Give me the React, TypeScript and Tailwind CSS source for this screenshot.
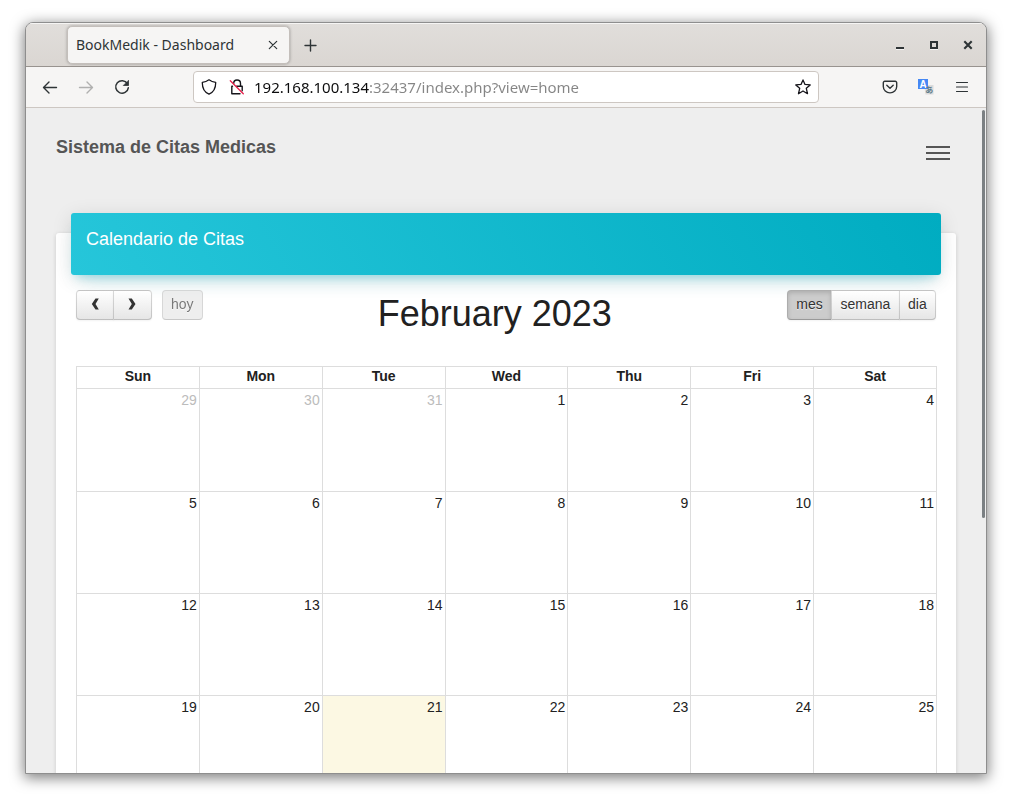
import { useState } from "react";

const DAYS = ["Sun", "Mon", "Tue", "Wed", "Thu", "Fri", "Sat"];

type Day = { n: number; other?: boolean; today?: boolean };

const WEEKS: Day[][] = [
  [{ n: 29, other: true }, { n: 30, other: true }, { n: 31, other: true }, { n: 1 }, { n: 2 }, { n: 3 }, { n: 4 }],
  [5, 6, 7, 8, 9, 10, 11].map((n) => ({ n })),
  [12, 13, 14, 15, 16, 17, 18].map((n) => ({ n })),
  [19, 20, 21, 22, 23, 24, 25].map((n) => ({ n, today: n === 21 })),
];

const VIEWS = ["mes", "semana", "dia"];

function TitleBar() {
  return (
    <div className="flex h-11 shrink-0 items-center border-b border-[#98938f] bg-linear-to-b from-[#e1dedb] to-[#dad6d2] pl-[41px] pr-2 shadow-[inset_0_1px_0_#f6f5f4]">
      <div className="flex h-[38px] w-[223px] items-center justify-between rounded-[5px] border border-[#c4bfbb] bg-[#f6f5f4] px-2 shadow-[0_0_3px_rgba(0,0,0,0.3)]">
        <span className="text-sm leading-5 text-[#2e3436]">BookMedik - Dashboard</span>
        <button aria-label="Close tab" className="flex size-4 items-center justify-center">
          <svg width="16" height="16" viewBox="0 0 16 16" stroke="#2e3436" strokeWidth="1.2" strokeLinecap="round">
            <path d="M4.3 4.3l7.4 7.4M11.7 4.3l-7.4 7.4" />
          </svg>
        </button>
      </div>
      <button aria-label="New tab" className="ml-3 flex size-4 items-center justify-center">
        <svg width="16" height="16" viewBox="0 0 16 16" stroke="#2e3436" strokeWidth="1.4" strokeLinecap="round">
          <path d="M8.500 3v11M3 8.500h11" />
        </svg>
      </button>
      <div className="ml-auto flex gap-[14px]">
        <button aria-label="Minimize" className="flex size-5 items-center justify-center">
          <svg width="16" height="16" viewBox="0 0 16 16">
            <path d="M4 10h8v2H4z" fill="#2e3436" />
            <path d="M4 12h8v1H4z" fill="#f6f5f4" />
          </svg>
        </button>
        <button aria-label="Maximize" className="flex size-5 items-center justify-center">
          <svg width="16" height="16" viewBox="0 0 16 16" fill="none">
            <path d="M4 12.5h8" stroke="#f6f5f4" />
            <path d="M5 5h6v6H5z" stroke="#2e3436" strokeWidth="2" />
          </svg>
        </button>
        <button aria-label="Close window" className="flex size-5 items-center justify-center">
          <svg width="16" height="16" viewBox="0 0 16 16" stroke="#2e3436" strokeWidth="2.1">
            <path d="M4.3 4.3l7.4 7.4M11.7 4.3l-7.4 7.4" />
          </svg>
        </button>
      </div>
    </div>
  );
}

function NavBar() {
  const [url, setUrl] = useState("192.168.100.134:32437/index.php?view=home");
  return (
    <div className="flex h-[41px] shrink-0 items-center border-b border-[#cdc7c2] bg-[#f6f5f4] px-4">
      <div className="flex gap-5">
        <button aria-label="Back">
          <svg width="16" height="16" viewBox="0 0 16 16" fill="none" stroke="#2e3436" strokeWidth="1.4" strokeLinecap="round" strokeLinejoin="round">
            <path d="M14.500 8.500H1.500M7 3L1.500 8.500L7 14" />
          </svg>
        </button>
        <button aria-label="Forward" disabled>
          <svg width="16" height="16" viewBox="0 0 16 16" fill="none" stroke="#b0b0af" strokeWidth="1.4" strokeLinecap="round" strokeLinejoin="round">
            <path d="M1.500 8.500h13M9 3L14.500 8.500L9 14" />
          </svg>
        </button>
        <button aria-label="Reload">
          <svg width="16" height="16" viewBox="0 0 16 16" fill="none" stroke="#2e3436" strokeWidth="1.5" strokeLinecap="round">
            <path d="M13.4 4.600A6.300 6.300 0 1 0 14.300 8.800" />
            <path d="M14.500 1.700v4.800H9.700z" fill="#2e3436" stroke="#2e3436" strokeWidth="0.800" strokeLinejoin="round" />
          </svg>
        </button>
      </div>
      <div className="ml-[63px] mr-[63px] flex h-8 flex-1 items-center rounded-[4px] border border-[#cdc7c2] bg-white px-[7px]">
        <svg width="16" height="16" viewBox="0 0 16 16" fill="none" stroke="#15141a" strokeWidth="1.3" strokeLinejoin="round">
          <path d="M8 .8C6 2.300 3.800 3.100 1.300 3.400C1.200 9 3.200 13.200 8 15.200C12.800 13.200 14.800 9 14.700 3.400C12.200 3.100 10 2.300 8 .8z" />
        </svg>
        <svg className="ml-3" width="16" height="16" viewBox="0 0 16 16" fill="none" strokeLinecap="round">
          <path d="M4.700 4.500C4.700 2.300 6 1 8 1s3.500 1.400 3.500 3.500V7M3.500 7.300H2.800v7.400H11M7.500 7.300h5.700v4.500" stroke="#15141a" strokeWidth="1.400" strokeLinejoin="round" />
          <path d="M1.300 1.800L14.300 14.800" stroke="#e8204c" strokeWidth="1.300" />
        </svg>
        <input
          aria-label="Address"
          value={url}
          onChange={(e) => setUrl(e.target.value)}
          className="ml-[9px] min-w-0 flex-1 bg-[linear-gradient(to_right,#0c0c0d_115px,#858585_115px)] bg-clip-text text-[15px] leading-6 text-transparent caret-black outline-none"
        />
        <button aria-label="Bookmark this page">
          <svg width="16" height="16" viewBox="0 0 16 16" fill="none" stroke="#15141a" strokeWidth="1.300" strokeLinejoin="round">
            <path d="M8 .9L10 5.400L15.200 5.900L11.300 9.300L12.500 14.700L8 12L3.500 14.700L4.700 9.300L.8 5.900L6 5.400z" />
          </svg>
        </button>
      </div>
      <div className="flex gap-5">
        <button aria-label="Save to Pocket">
          <svg width="16" height="16" viewBox="0 0 16 16" fill="none" stroke="#2e3436" strokeWidth="1.400" strokeLinecap="round" strokeLinejoin="round">
            <path d="M2.800 2.200h10.400a1.500 1.500 0 0 1 1.500 1.500v3.700a6.700 6.500 0 0 1-13.400 0V3.700a1.500 1.500 0 0 1 1.500-1.500z" />
            <path d="M4.800 6.200L8 9.200l3.200-3" />
          </svg>
        </button>
        <button aria-label="Translate">
          <svg width="16" height="16" viewBox="0 0 16 16">
            <path d="M6 6h9.500v9.500H7.500z" fill="#dcdcdc" />
            <path d="M0 0h10v10H0z" fill="#4688f4" />
            <text x="5" y="8.500" textAnchor="middle" fontSize="10" fontWeight="700" fill="#fff" fontFamily="Liberation Sans, sans-serif">A</text>
            <text x="11.300" y="14" textAnchor="middle" fontSize="8" fontWeight="700" fill="#607d8b" fontFamily="Noto Sans CJK JP, sans-serif">あ</text>
          </svg>
        </button>
        <button aria-label="Application menu">
          <svg width="16" height="16" viewBox="0 0 16 16" stroke="#2e3436" strokeWidth="1.200" strokeLinecap="round">
            <path d="M2.500 3.500h11M2.500 8h11M2.500 12.500h11" />
          </svg>
        </button>
      </div>
    </div>
  );
}

const BUTTON =
  "h-[30px] border border-[rgba(0,0,0,0.15)] border-b-[rgba(0,0,0,0.25)] pb-[2px] text-sm [text-shadow:0_1px_1px_rgba(255,255,255,0.75)]";
const RAISED =
  "bg-linear-to-b from-white to-[#e6e6e6] text-[#333] shadow-[inset_0_1px_0_rgba(255,255,255,0.2),0_1px_2px_rgba(0,0,0,0.05)]";
const PRESSED =
  "bg-[#ccc] text-[#333] shadow-[inset_0_2px_4px_rgba(0,0,0,0.15),0_1px_2px_rgba(0,0,0,0.05)]";

function CalendarToolbar() {
  const [view, setView] = useState("mes");
  return (
    <div className="flex items-start justify-between">
      <div className="flex">
        <button aria-label="Previous month" className={`${BUTTON} ${RAISED} flex w-[38px] items-center justify-center rounded-l`}>
          <svg width="10" height="12" viewBox="0 0 10 12" fill="#333">
            <path d="M5.500 .5H8.800L5.500 6L8.800 11.500H5.500L1.800 6z" />
          </svg>
        </button>
        <button aria-label="Next month" className={`${BUTTON} ${RAISED} -ml-px flex w-[39px] items-center justify-center rounded-r`}>
          <svg width="10" height="12" viewBox="0 0 10 12" fill="#333">
            <path d="M3.800 .5H.5L3.800 6L.5 11.500H3.800L7.500 6z" />
          </svg>
        </button>
        <button disabled className={`${BUTTON} ml-[10px] rounded bg-[#e6e6e6] px-2 text-[#333] opacity-65`}>
          hoy
        </button>
      </div>
      <h2 className="mt-1 text-4xl leading-[40px] text-[#212121]">February 2023</h2>
      <div className="flex min-w-[149px]">
        {VIEWS.map((v) => (
          <button
            key={v}
            onClick={() => setView(v)}
            className={`${BUTTON} ${v === view ? PRESSED : RAISED} -ml-px grow px-2 first:ml-0 first:rounded-l last:rounded-r`}
          >
            {v}
          </button>
        ))}
      </div>
    </div>
  );
}

function MonthGrid() {
  return (
    <table className="mt-8 w-[calc(100%+1px)] table-fixed border-collapse text-sm text-[#212121]">
      <thead>
        <tr>
          {DAYS.map((d) => (
            <th key={d} className="h-[22px] border border-[#ddd] p-0 text-center align-top leading-[18px] font-bold">
              {d}
            </th>
          ))}
        </tr>
      </thead>
      <tbody className="[&>tr:first-child>td]:h-[103px]">
        {WEEKS.map((week) => (
          <tr key={week[0].n}>
            {week.map((d) => (
              <td
                key={d.n}
                className={`h-[102px] border border-[#ddd] px-[2px] pt-[1px] text-right align-top leading-5 ${
                  d.today ? "bg-[#fcf8e3]" : ""
                } ${d.other ? "text-[#bcbcbc]" : ""}`}
              >
                {d.n}
              </td>
            ))}
          </tr>
        ))}
      </tbody>
    </table>
  );
}

export default function App() {
  return (
    <div className="h-screen bg-white px-[25px] pt-[22px] pb-[28px] font-['Noto_Sans',sans-serif]">
      <div className="flex h-full flex-col overflow-hidden rounded-t-lg border border-[#8e8e8e] bg-[#eee] shadow-[0_3px_14px_1px_rgba(0,0,0,0.5)]">
        <TitleBar />
        <NavBar />
        <main className="relative min-h-0 flex-1 overflow-hidden bg-[#eee] px-[30px] font-['Liberation_Sans',Arial,sans-serif]">
          <header className="flex items-start justify-between pt-[29px] pr-[6px]">
            <a href="#inicio" className="text-lg leading-5 font-bold text-[#555]">
              Sistema de Citas Medicas
            </a>
            <button aria-label="Toggle navigation" className="mt-[9px] flex flex-col gap-1">
              <span className="h-[2px] w-6 bg-[#555]" />
              <span className="h-[2px] w-6 bg-[#555]" />
              <span className="h-[2px] w-6 bg-[#555]" />
            </button>
          </header>
          <section className="mt-[73px] rounded-[3px] bg-white shadow-[0_1px_4px_rgba(0,0,0,0.14)]">
            <div className="relative -top-5 mx-[15px] h-[62px] rounded-[3px] bg-[linear-gradient(60deg,#26c6da,#00acc1)] px-[15px] pt-[14px] shadow-[0_12px_20px_-10px_rgba(0,188,212,0.28),0_4px_20px_0_rgba(0,0,0,0.12),0_7px_8px_-5px_rgba(0,188,212,0.2)]">
              <h4 className="text-lg leading-6 text-white">Calendario de Citas</h4>
            </div>
            <div className="relative -mt-[5px] px-5 pb-5">
              <CalendarToolbar />
              <MonthGrid />
            </div>
          </section>
          <div className="absolute top-[2px] right-px h-[408px] w-[3px] rounded-full bg-[#7b8083]" />
        </main>
      </div>
    </div>
  );
}
